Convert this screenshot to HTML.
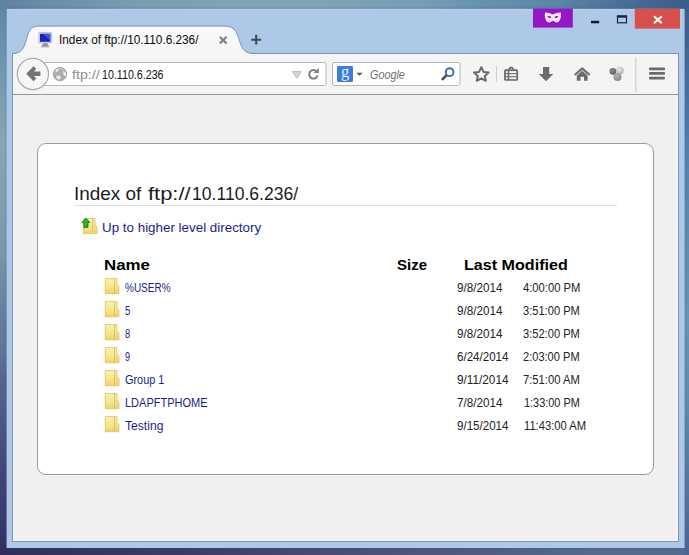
<!DOCTYPE html>
<html><head><meta charset="utf-8"><title>Index of ftp://10.110.6.236/</title>
<style>
html,body{margin:0;padding:0;}
body{width:689px;height:555px;overflow:hidden;position:relative;font-family:"Liberation Sans",sans-serif;background:#4f6a8c;}
.abs{position:absolute;}
.t{position:absolute;white-space:nowrap;line-height:1;transform-origin:0 0;}
#dtop{left:0;top:0;width:689px;height:10px;background:linear-gradient(90deg,#5f80a0 0%,#6a8ba8 6%,#7a9db3 20%,#80a3b5 33%,#80a3b6 47%,#769db6 62%,#6a95b2 67%,#5a85a5 81%,#4a7098 90%,#3b5a88 100%);}
#dbot{left:0;top:547px;width:689px;height:8px;background:linear-gradient(90deg,#2f2e5c 0%,#323260 7%,#3d3e69 30%,#4a4c75 48%,#50587f 65%,#566a8c 86%,#546b90 100%);}
#dleft{left:0;top:0;width:8px;height:555px;background:linear-gradient(180deg,#5d84a5 0%,#668eac 6%,#7096b0 11%,#87a5b2 26%,#7f9fb0 36%,#7b98ab 45%,#6a84a2 54%,#5f7597 63%,#556690 68%,#4a5586 77%,#3f4578 85%,#383a6e 94%,#2e2d5e 100%);}
#dright{left:684px;top:0;width:5px;height:555px;background:linear-gradient(180deg,#3c5d8a 0%,#40638f 6%,#4a72a0 18%,#5a84ad 31%,#6a92b2 58%,#6389ad 72%,#567aa2 85%,#4a6590 100%);}
#win{left:7px;top:9px;width:677px;height:539px;background:#aec9e7;box-shadow:-1px 0 0 rgba(174,201,231,0.4),1px 0 0 rgba(174,201,231,0.6),0 -1px 0 rgba(174,201,231,0.2),inset 0 1px 0 #b6d0ea,0 0 2px 1px rgba(60,80,120,0.28);}
#inner{left:12px;top:53px;width:667px;height:489px;background:#7f93ab;}
#navbar{left:13px;top:54px;width:665px;height:40px;background:#f4f4f4;border-top:1px solid #fafafb;box-sizing:border-box;}
#navline{left:13px;top:94px;width:665px;height:1px;background:#939699;}
#content{left:13px;top:95px;width:665px;height:446px;background:#f0f0f0;box-shadow:inset 1px 0 0 #f3f8fd,inset -1px -1px 0 #f3f8fd,inset -2px 0 0 #eef3fa;}
#box{left:37px;top:143px;width:617px;height:332px;background:#fff;border:1px solid #9c9c9c;border-radius:9px;box-sizing:border-box;}
#hr{left:74px;top:205px;width:543px;height:1px;background:#dedede;}
#chrome{left:0;top:0;}
</style></head><body>
<div id="dtop" class="abs"></div>
<div id="dbot" class="abs"></div>
<div id="dleft" class="abs"></div>
<div id="dright" class="abs"></div>
<div id="win" class="abs"></div>
<div id="inner" class="abs"></div>
<div id="navbar" class="abs"></div>
<div id="navline" class="abs"></div>
<div id="content" class="abs"></div>
<div id="box" class="abs"></div>
<div id="hr" class="abs"></div>
<svg id="chrome" class="abs" width="689" height="555" viewBox="0 0 689 555">
<defs>
<linearGradient id="fold" x1="0" y1="0" x2="0" y2="1"><stop offset="0" stop-color="#fbf1b0"/><stop offset="0.6" stop-color="#f6e48c"/><stop offset="1" stop-color="#efd264"/></linearGradient>
<linearGradient id="fold2" x1="0" y1="0" x2="0" y2="1"><stop offset="0" stop-color="#f7e79a"/><stop offset="1" stop-color="#ecc95c"/></linearGradient>
<radialGradient id="sph1" cx="0.4" cy="0.35" r="0.7"><stop offset="0" stop-color="#e6e6e6"/><stop offset="1" stop-color="#b4b4b4"/></radialGradient>
<radialGradient id="sph2" cx="0.4" cy="0.35" r="0.7"><stop offset="0" stop-color="#8a8a8a"/><stop offset="1" stop-color="#5e5e5e"/></radialGradient>
<radialGradient id="sph3" cx="0.4" cy="0.35" r="0.7"><stop offset="0" stop-color="#b2b2b2"/><stop offset="1" stop-color="#858585"/></radialGradient>
<linearGradient id="tabg" x1="0" y1="26" x2="0" y2="54" gradientUnits="userSpaceOnUse"><stop offset="0" stop-color="#fbfbfc"/><stop offset="1" stop-color="#f4f4f4"/></linearGradient>
<g id="folder">
<rect x="-0.6" y="-0.6" width="15.6" height="17.2" rx="2" fill="#fdf8d8" opacity="0.55"/>
<path d="M0.4 0.5 H12 V7.4 C13.3 7.6 14 8.2 14 9.4 V15.6 H0.4 Z" fill="url(#fold)" stroke="#d8c566" stroke-width="0.8"/>
<path d="M9.6 0.6 V15.5" stroke="#cfb955" stroke-width="0.8"/>
<path d="M12 7.4 V15.5" stroke="#e2cf78" stroke-width="0.6"/>
</g>
</defs>
<!-- tab -->
<path d="M12 54 C20.5 53.8 23 50 25 44.5 L28 34.5 C29.8 29.5 33 26.5 39 26.5 H225 C232 26.5 235.5 30 237.5 35.5 L241 45.5 C243 50.5 246 53.8 254 54 Z" fill="url(#tabg)"/>
<path d="M12 53.5 C20.5 53.3 23 49.5 25 44 L28 34 C29.8 29 33 26 39 26 H225 C232 26 235.5 29.5 237.5 35 L241 45 C243 50 246 53.3 254 53.5" fill="none" stroke="#8397b0" stroke-width="1"/>
<!-- favicon -->
<rect x="38.8" y="32.4" width="12.9" height="10.7" rx="0.8" fill="#d3d6de" stroke="#a4a8b6" stroke-width="0.6"/>
<rect x="40" y="33.8" width="10.3" height="8" fill="#1a24bd"/>
<path d="M43 33.8 H50.3 V40.5 Z" fill="#4868e6" opacity="0.75"/>
<path d="M43.4 43.3 H47.2 L49.6 47.3 H40.6 Z" fill="#8d9097"/>
<path d="M41 46.4 H49.2" stroke="#b9bcc2" stroke-width="0.8"/>
<!-- tab close -->
<path d="M219.8 36.8 L226.6 43.4 M226.6 36.8 L219.8 43.4" stroke="#808080" stroke-width="2.1"/>
<!-- new tab plus -->
<path d="M251.2 39.7 H261.2 M256.2 34.8 V44.6" stroke="#3e4955" stroke-width="2.1"/>
<!-- url bar -->
<rect x="28.5" y="62.5" width="297.5" height="23" rx="1.5" fill="#fff" stroke="#b4b9c0"/>
<!-- back button -->
<circle cx="32.9" cy="74" r="15.6" fill="#f6f6f7" stroke="#a9acb1" stroke-width="1.2"/>
<path d="M26.2 73.7 L33.5 66.2 L36.3 69 L33.9 71.4 H40.4 V76 H33.9 L36.3 78.4 L33.5 81.2 Z" fill="#747474"/>
<!-- globe -->
<circle cx="60" cy="74.1" r="6.7" fill="#adadad" stroke="#9c9c9c" stroke-width="0.8"/>
<g fill="#ededed">
<path d="M55.3 71.6 C55.6 69.6 57.6 68.3 59.4 68.5 C59 70 58 70.4 57.4 71.6 C56.8 72.4 55.8 72.4 55.3 71.6 Z"/>
<path d="M63.6 70.9 C65.4 71.6 66.3 73.4 66 75.4 C65.2 76.4 64 76.2 63.6 75 C63.2 73.6 63 72 63.6 70.9 Z"/>
<path d="M56.2 76 C57.6 75 60 75.2 60.8 76.6 C61 78.2 60 79.4 58.6 79.6 C57.2 79 56.2 77.6 56.2 76 Z"/>
</g>
<path d="M60.2 68.3 C61.6 68.4 62.6 69 63 69.8" stroke="#e4e4e4" stroke-width="0.8" fill="none"/>
<!-- dropdown -->
<path d="M292.3 71.6 H301.3 L296.8 78.3 Z" fill="#d4d4d4" stroke="#bdbdbd" stroke-width="1"/>
<!-- reload -->
<path d="M316.7 71.4 A4.3 4.3 0 1 0 317.6 75.6" fill="none" stroke="#7b8187" stroke-width="2"/>
<path d="M313.6 72.9 H318.8 V68 Z" fill="#7b8187"/>
<!-- search bar -->
<rect x="332.5" y="62.5" width="127.5" height="23" rx="1.5" fill="#fff" stroke="#b4b9c0"/>
<rect x="337" y="66" width="16" height="16" rx="1.3" fill="#3d7bdd"/>
<text x="345" y="76.8" text-anchor="middle" font-family="Liberation Serif, serif" font-size="16.5" fill="#e4efff">g</text>
<path d="M356.3 72.7 H362.7 L359.5 75.8 Z" fill="#555"/>
<!-- magnifier -->
<path d="M446.6 75.2 L442.6 79.2" stroke="#3f4e63" stroke-width="2.6" stroke-linecap="round"/>
<circle cx="449.6" cy="72.2" r="3.9" fill="#fff" stroke="#3b6da3" stroke-width="1.9"/>
<!-- star -->
<path d="M481.3 67.2 L483.5 71.9 L488.6 72.5 L484.8 76 L485.8 80.8 L481.3 78.3 L476.8 80.8 L477.8 76 L474 72.5 L479.1 71.9 Z" fill="#f7f7f8" stroke="#6a6a6a" stroke-width="2" stroke-linejoin="round"/>
<rect x="496" y="66" width="1" height="15.5" fill="#cfcfcf"/>
<!-- bookmarks menu -->
<rect x="504.1" y="69.2" width="14" height="11.6" rx="1.6" fill="#696969"/>
<path d="M507.6 69.6 L510 66.7 H512.2 L514.6 69.6 Z" fill="#696969"/>
<path d="M510.3 69.4 L511.1 68.3 L511.9 69.4 Z" fill="#f4f4f6"/>
<g fill="#f6f6f6">
<rect x="505.8" y="71.1" width="1.9" height="2"/><rect x="509.2" y="71.1" width="7.2" height="2"/>
<rect x="505.8" y="74.2" width="1.9" height="2"/><rect x="509.2" y="74.2" width="7.2" height="2"/>
<rect x="505.8" y="77.3" width="1.9" height="1.9"/><rect x="509.2" y="77.3" width="7.2" height="1.9"/>
</g>
<!-- download -->
<path d="M543 67 H549.2 V74 H553.3 L546.1 81.3 L538.8 74 H543 Z" fill="#6c6c6c"/>
<!-- home -->
<path d="M582.2 67.1 L590.4 74.3 L589 75.8 L582.2 69.9 L575.4 75.8 L574 74.3 Z" fill="#6c6c6c"/>
<path d="M582.2 70.8 L587.6 75.5 V80.8 H584 V76.8 H580.5 V80.8 H576.8 V75.5 Z" fill="#6c6c6c"/>
<!-- social -->
<circle cx="620" cy="70.6" r="3.9" fill="url(#sph1)"/>
<circle cx="612.9" cy="71.4" r="3.3" fill="url(#sph2)"/>
<circle cx="617.5" cy="76.9" r="4" fill="url(#sph3)"/>
<rect x="635.3" y="57" width="1" height="35" fill="#c9c9c9"/>
<!-- hamburger -->
<rect x="649" y="67.5" width="16" height="2.7" rx="0.8" fill="#6a6a6a"/>
<rect x="649" y="72.1" width="16" height="2.7" rx="0.8" fill="#6a6a6a"/>
<rect x="649" y="76.7" width="16" height="2.7" rx="0.8" fill="#6a6a6a"/>
<!-- private -->
<rect x="533" y="8.5" width="39.8" height="19.1" fill="#9516c4"/>
<path d="M545 12.5 C547 12.3 550.5 13.1 552.9 14.5 C555.3 13.1 558.8 12.3 560.8 12.5 C561.6 17 560 22.3 556.8 22.4 C554.8 22.4 553.9 20.7 552.9 20.7 C551.9 20.7 551 22.4 549 22.4 C545.8 22.3 544.2 17 545 12.5 Z" fill="#fbe6fc"/>
<path d="M547.5 16.3 C549 15.7 550.8 16.3 551.4 17.7 C550 18.4 548.1 18 547.5 16.3 Z M558.3 16.3 C556.8 15.7 555 16.3 554.4 17.7 C555.8 18.4 557.7 18 558.3 16.3 Z" fill="#8a14b5"/>
<!-- min max close -->
<rect x="591" y="20.8" width="8.2" height="2.5" fill="#151a22"/>
<rect x="617.5" y="16.6" width="9" height="6.2" fill="none" stroke="#16233a" stroke-width="1.2"/>
<rect x="616.9" y="15.2" width="10.2" height="2.4" fill="#16233a"/>
<rect x="634.8" y="8.8" width="45.2" height="19.8" fill="#d8504b"/>
<path d="M654 16.2 L661.8 23.2 M661.8 16.2 L654 23.2" stroke="#fff" stroke-width="2.1"/>
<!-- up icon -->
<use href="#folder" x="83" y="218"/>
<path d="M85.95 218.3 L89.7 222.4 H87.9 V227.3 H84 V222.4 H82.2 Z" fill="#2db82d" stroke="#117411" stroke-width="1" stroke-linejoin="round"/>
<use href="#folder" x="104.9" y="278.1"/>
<use href="#folder" x="104.9" y="301.1"/>
<use href="#folder" x="104.9" y="324.1"/>
<use href="#folder" x="104.9" y="347.1"/>
<use href="#folder" x="104.9" y="370.1"/>
<use href="#folder" x="104.9" y="393.1"/>
<use href="#folder" x="104.9" y="416.1"/>

</svg>
<div id="tabs-toolbar"><div class="t" id="tab" style="left:58.82px;top:34.06px;font-size:12.1px;transform:scaleX(0.9752);color:#0a0a0a;">Index of ftp://10.110.6.236/</div></div>
<div id="nav-toolbar"><div id="urlbar"><div class="t" id="urlp" style="left:72.10px;top:69.25px;font-size:12.7px;transform:scaleX(1.1210);color:#8c8c8c;">ftp://</div><div class="t" id="urlh" style="left:101.50px;top:69.25px;font-size:12.7px;transform:scaleX(0.8415);color:#111;">10.110.6.236</div></div><div id="searchbar"><div class="t" id="goog" style="left:369.70px;top:69.37px;font-size:12.2px;transform:scaleX(0.8856);color:#717171;font-style:italic;">Google</div></div></div>
<div id="dir-listing">
<h1 id="h1" style="margin:0;font-weight:normal;"><span class="t" id="h1_0" style="left:73.58px;top:184.94px;font-size:18.5px;transform:scaleX(1.0215);color:#1c1c1c;">Index of</span><span class="t" style="left:141.7px;top:184.94px;font-size:18.5px;"> </span><span class="t" id="h1_2" style="left:148.30px;top:184.94px;font-size:18.5px;transform:scaleX(1.1832);color:#1c1c1c;">ftp://</span><span class="t" id="h1_3" style="left:191.65px;top:184.94px;font-size:18.5px;transform:scaleX(0.9494);color:#1c1c1c;">10.110.6.236/</span></h1>
<p id="up-link" style="margin:0;"><a class="t" id="up" style="left:101.60px;top:221.96px;font-size:12.8px;transform:scaleX(1.0457);color:#1c1c8e;">Up to higher level directory</a></p>
<div class="thead"><div class="t" id="thn" style="left:103.80px;top:256.66px;font-size:15.4px;transform:scaleX(1.0953);color:#000;font-weight:bold;">Name</div><div class="t" id="ths" style="left:396.60px;top:256.66px;font-size:15.4px;transform:scaleX(0.9732);color:#000;font-weight:bold;">Size</div><div class="t" id="thm" style="left:463.95px;top:256.66px;font-size:15.4px;transform:scaleX(1.0462);color:#000;font-weight:bold;">Last Modified</div></div>
<div class="row"><a class="t" id="n0" style="left:125.00px;top:281.94px;font-size:12px;transform:scaleX(0.8326);color:#1c1c8e;">%USER%</a><div class="t" id="d0" style="left:457.20px;top:281.94px;font-size:12px;transform:scaleX(0.9737);color:#222;">9/8/2014</div><div class="t" id="t0" style="left:523.20px;top:281.94px;font-size:12px;transform:scaleX(0.9352);color:#222;">4:00:00 PM</div></div>
<div class="row"><a class="t" id="n1" style="left:125.00px;top:304.94px;font-size:12px;transform:scaleX(0.7857);color:#1c1c8e;">5</a><div class="t" id="d1" style="left:457.20px;top:304.94px;font-size:12px;transform:scaleX(0.9737);color:#222;">9/8/2014</div><div class="t" id="t1" style="left:523.20px;top:304.94px;font-size:12px;transform:scaleX(0.9255);color:#222;">3:51:00 PM</div></div>
<div class="row"><a class="t" id="n2" style="left:125.00px;top:327.94px;font-size:12px;transform:scaleX(0.7857);color:#1c1c8e;">8</a><div class="t" id="d2" style="left:457.20px;top:327.94px;font-size:12px;transform:scaleX(0.9737);color:#222;">9/8/2014</div><div class="t" id="t2" style="left:523.20px;top:327.94px;font-size:12px;transform:scaleX(0.9255);color:#222;">3:52:00 PM</div></div>
<div class="row"><a class="t" id="n3" style="left:125.00px;top:350.94px;font-size:12px;transform:scaleX(0.7571);color:#1c1c8e;">9</a><div class="t" id="d3" style="left:457.20px;top:350.94px;font-size:12px;transform:scaleX(0.9644);color:#222;">6/24/2014</div><div class="t" id="t3" style="left:523.20px;top:350.94px;font-size:12px;transform:scaleX(0.9222);color:#222;">2:03:00 PM</div></div>
<div class="row"><a class="t" id="n4" style="left:125.00px;top:373.94px;font-size:12px;transform:scaleX(0.9065);color:#1c1c8e;">Group 1</a><div class="t" id="d4" style="left:457.20px;top:373.94px;font-size:12px;transform:scaleX(0.9807);color:#222;">9/11/2014</div><div class="t" id="t4" style="left:523.20px;top:373.94px;font-size:12px;transform:scaleX(0.9352);color:#222;">7:51:00 AM</div></div>
<div class="row"><a class="t" id="n5" style="left:125.00px;top:396.94px;font-size:12px;transform:scaleX(0.9166);color:#1c1c8e;">LDAPFTPHOME</a><div class="t" id="d5" style="left:457.20px;top:396.94px;font-size:12px;transform:scaleX(0.9737);color:#222;">7/8/2014</div><div class="t" id="t5" style="left:524.00px;top:396.94px;font-size:12px;transform:scaleX(0.9092);color:#222;">1:33:00 PM</div></div>
<div class="row"><a class="t" id="n6" style="left:125.00px;top:419.94px;font-size:12px;transform:scaleX(1.0094);color:#1c1c8e;">Testing</a><div class="t" id="d6" style="left:457.20px;top:419.94px;font-size:12px;transform:scaleX(0.9644);color:#222;">9/15/2014</div><div class="t" id="t6" style="left:524.00px;top:419.94px;font-size:12px;transform:scaleX(0.9321);color:#222;">11:43:00 AM</div></div>
</div>
</body></html>
